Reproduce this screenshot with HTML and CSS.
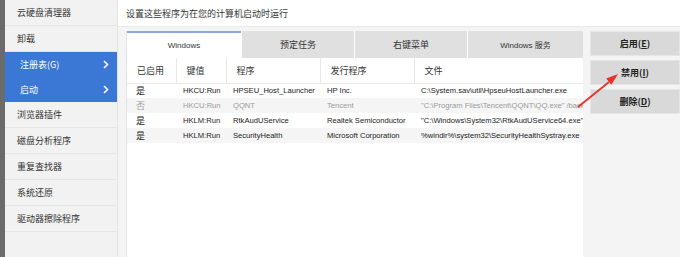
FILE: index.html
```html
<!DOCTYPE html>
<html lang="zh">
<head>
    <meta charset="UTF-8">
    <title>启动</title>
    <link rel="stylesheet" href="styles.css">
</head>
<body>
  <div class="app">
    <div class="strip"></div>

    <ul class="sidebar">
      <li class="nav">云硬盘清理器</li>
      <li class="nav">卸载</li>
      <li class="nav active">注册表(G)
        <svg class="chev" width="6" height="9" viewBox="0 0 6 9"><polyline points="1,1 4.5,4.5 1,8" fill="none" stroke="#fff" stroke-width="1.6"/></svg>
      </li>
      <li class="nav active">启动
        <svg class="chev" width="6" height="9" viewBox="0 0 6 9"><polyline points="1,1 4.5,4.5 1,8" fill="none" stroke="#fff" stroke-width="1.6"/></svg>
      </li>
      <li class="nav">浏览器插件</li>
      <li class="nav">磁盘分析程序</li>
      <li class="nav">重复查找器</li>
      <li class="nav">系统还原</li>
      <li class="nav">驱动器擦除程序</li>
    </ul>

    <div class="main">
      <div class="title">设置这些程序为在您的计算机启动时运行</div>

      <div class="content">
        <div class="panel">
          <div class="tabs">
            <div class="tab current">Windows</div>
            <div class="tab">预定任务</div>
            <div class="tab">右键菜单</div>
            <div class="tab">Windows 服务</div>
          </div>

          <table class="grid">
            <colgroup>
              <col style="width:49px"><col style="width:50px"><col style="width:94px"><col style="width:94px"><col style="width:170px">
            </colgroup>
            <thead>
              <tr><th>已启用</th><th>键值</th><th>程序</th><th>发行程序</th><th>文件</th></tr>
            </thead>
            <tbody>
              <tr><td class="cn">是</td><td>HKCU:Run</td><td>HPSEU_Host_Launcher</td><td>HP Inc.</td><td>C:\System.sav\util\HpseuHostLauncher.exe</td></tr>
              <tr class="off"><td class="cn">否</td><td>HKCU:Run</td><td>QQNT</td><td>Tencent</td><td>"C:\Program Files\Tencent\QQNT\QQ.exe" /background</td></tr>
              <tr><td class="cn">是</td><td>HKLM:Run</td><td>RtkAudUService</td><td>Realtek Semiconductor</td><td>"C:\Windows\System32\RtkAudUService64.exe" -background</td></tr>
              <tr class="alt"><td class="cn">是</td><td>HKLM:Run</td><td>SecurityHealth</td><td>Microsoft Corporation</td><td>%windir%\system32\SecurityHealthSystray.exe</td></tr>
            </tbody>
          </table>
        </div>

        <div class="actions">
          <button class="btn">启用(<u>E</u>)</button>
          <button class="btn">禁用(<u>I</u>)</button>
          <button class="btn">删除(<u>D</u>)</button>
        </div>

        <svg class="arrow" width="50" height="40" viewBox="0 0 50 40">
          <line x1="2" y1="36" x2="33" y2="11" stroke="#e8332b" stroke-width="1.8"/>
          <polygon points="42,3 35.4,13.8 30.2,7.6" fill="#e8332b"/>
        </svg>
      </div>
    </div>
  </div>
</body>
</html>
```

FILE: styles.css
```css
* {
    margin: 0;
    padding: 0;
    box-sizing: border-box;
}
body {
    width: 680px;
    height: 257px;
    overflow: hidden;
    font-family: "Noto Sans CJK SC", "Liberation Sans", sans-serif;
    font-size: 9px;
    color: #333;
    background: #f4f4f4;
}
.app {
    display: flex;
    height: 257px;
}
.strip {
    width: 5px;
    background: #6b6b6b;
}
.sidebar {
    width: 113px;
    list-style: none;
    background: #f2f2f2;
    border-right: 1px solid #e4e4e4;
}
.sidebar .nav {
    height: 26px;
    display: flex;
    align-items: center;
    justify-content: space-between;
    padding: 0 8px 0 12px;
    border-bottom: 1px solid #e6e6e6;
    color: #333;
}
.sidebar .nav.active {
    background: #3b77d4;
    color: #fff;
    padding-left: 15px;
    border-bottom: none;
    height: 25px;
}
.main {
    flex: 1;
    display: flex;
    flex-direction: column;
}
.title {
    height: 27px;
    background: #fff;
    border-bottom: 1px solid #e9e9e9;
    padding-left: 8px;
    display: flex;
    align-items: center;
    color: #333;
}
.content {
    flex: 1;
    position: relative;
    display: flex;
    gap: 7px;
    padding: 4px 0 0 8px;
    background: #f4f4f4;
}
.panel {
    width: 457px;
    background: #fff;
    border-left: 1px solid #e2e2e2;
    overflow: hidden;
}
.tabs {
    display: grid;
    grid-template-columns: 114px 112px 112px 1fr;
    gap: 1px;
    height: 27px;
    background: #fff;
}
.tab {
    display: flex;
    align-items: center;
    justify-content: center;
    background: #e0e0e0;
    color: #333;
    font-family: "Liberation Sans", "Noto Sans CJK SC", sans-serif;
    font-size: 8px;
}
.tab:nth-child(2), .tab:nth-child(3) {
    font-family: "Noto Sans CJK SC", sans-serif;
    font-size: 9px;
}
.tab.current {
    background: #fff;
    border-top: 2px solid #8aa9dc;
}
.grid {
    width: 457px;
    table-layout: fixed;
    border-collapse: collapse;
}
.grid th {
    height: 25px;
    font-weight: normal;
    text-align: left;
    padding-left: 10px;
    color: #333;
    border-right: 1px solid #e8e8e8;
    border-bottom: 1px solid #e8e8e8;
}
.grid th:last-child {
    border-right: none;
}
.grid td {
    height: 15px;
    padding-left: 7px;
    white-space: nowrap;
    overflow: hidden;
    font-family: "Liberation Sans", sans-serif;
    font-size: 7.6px;
    color: #1a1a1a;
}
.grid td.cn {
    font-family: "Noto Sans CJK SC", sans-serif;
    font-size: 9px;
    padding-left: 9px;
}
.grid tr.off td {
    background: #f5f5f5;
    color: #9a9a9a;
}
.grid tr.alt td {
    background: #f5f5f5;
}
.actions {
    width: 90px;
    display: flex;
    flex-direction: column;
    gap: 4px;
}
.btn {
    height: 25px;
    border: 1px solid #e6e6e6;
    background: #d9d9d9;
    font-family: "Noto Sans CJK SC", sans-serif;
    font-size: 9px;
    font-weight: bold;
    color: #222;
}
.arrow {
    position: absolute;
    left: 458px;
    top: 44px;
}
```
